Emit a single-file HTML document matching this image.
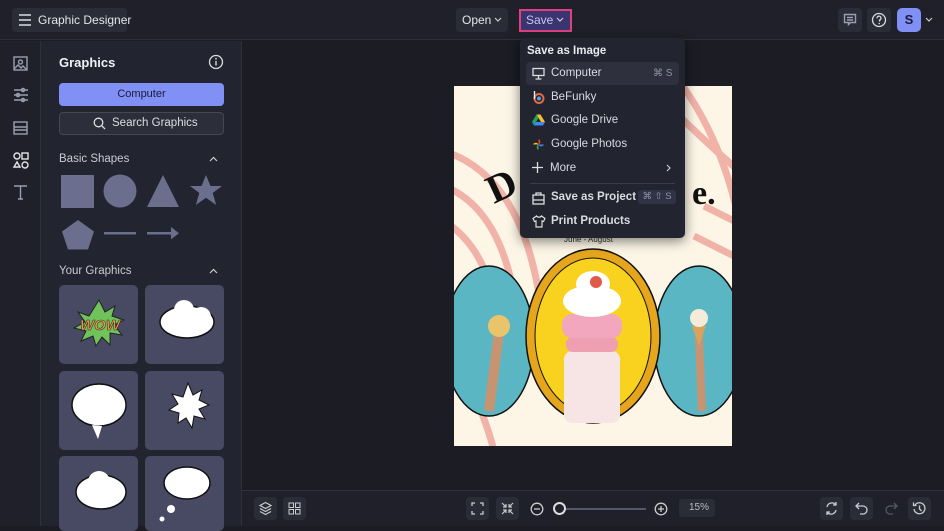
<!DOCTYPE html>
<html><head><meta charset="utf-8"><style>
*{box-sizing:border-box;margin:0;padding:0}
body{width:944px;height:526px;overflow:hidden;background:#1b1c24;font-family:"Liberation Sans",sans-serif;color:#e4e5ec;position:relative;font-size:12px}
.a{position:absolute}
.btn{position:absolute;background:#2a2c38;border-radius:4px}
.ic{stroke:#9a9db0;fill:none;stroke-width:1.4}
.tile{position:absolute;width:79px;height:79px;background:#474a62;border-radius:5px}
.mi{position:absolute;left:10px;font-size:11.5px;color:#d9dae3}
</style></head><body>
<!-- top bar -->
<div class="a" style="left:0;top:0;width:944px;height:40px;background:#1f2029;border-bottom:1px solid #2e303c"></div>
<div class="btn" style="left:12px;top:8px;width:115px;height:24px;background:#2a2c37"></div>
<svg class="a" style="left:18px;top:13px" width="14" height="14"><path d="M1 2h12M1 7h12M1 12h12" stroke="#ddd" stroke-width="1.4"/></svg>
<div class="a" style="left:38px;top:13px;font-size:12px;color:#e4e5ec">Graphic Designer</div>
<div class="btn" style="left:456px;top:8px;width:52px;height:24px"></div>
<div class="a" style="left:462px;top:13px;font-size:12px">Open</div>
<svg class="a" style="left:494px;top:17px" width="8" height="6"><path d="M1 1l3 3 3-3" stroke="#ccc" fill="none" stroke-width="1.2"/></svg>
<div class="a" style="left:519px;top:9px;width:53px;height:23px;background:#3a3470;border:2px solid #e0407e"></div>
<div class="a" style="left:526px;top:13px;font-size:12px;color:#c9c6f0">Save</div>
<svg class="a" style="left:556px;top:17px" width="8" height="6"><path d="M1 1l3 3 3-3" stroke="#ccc" fill="none" stroke-width="1.2"/></svg>
<div class="btn" style="left:838px;top:8px;width:24px;height:24px"></div>
<svg class="a" style="left:843px;top:13px" width="14" height="14"><path d="M1.5 1.5h11v8h-5l-2 2v-2h-4z M4 4.5h6M4 7h6" class="ic" stroke="#ddd"/></svg>
<div class="btn" style="left:867px;top:8px;width:24px;height:24px"></div>
<svg class="a" style="left:871px;top:12px" width="16" height="16"><circle cx="8" cy="8" r="6.5" stroke="#ddd" fill="none" stroke-width="1.3"/><path d="M6 6.3a2 2 0 1 1 2.5 1.8v1.4" stroke="#ddd" fill="none" stroke-width="1.3"/><circle cx="8.2" cy="11.5" r=".8" fill="#ddd"/></svg>
<div class="a" style="left:897px;top:8px;width:24px;height:24px;background:#8190f5;border-radius:5px;color:#1a1b3a;font-weight:bold;font-size:13px;text-align:center;line-height:24px">S</div>
<svg class="a" style="left:925px;top:17px" width="8" height="6"><path d="M1 1l3 3 3-3" stroke="#ccc" fill="none" stroke-width="1.2"/></svg>

<!-- left rail -->
<div class="a" style="left:0;top:41px;width:41px;height:485px;background:#1f2029;border-right:1px solid #2e303c"></div>
<svg class="a" style="left:12px;top:55px" width="18" height="150">
<rect x="2" y="2" width="13" height="13" class="ic"/><circle cx="8.5" cy="7" r="2" class="ic"/><path d="M2 14l4-4 3 3 2-2 4 4" class="ic"/>
<path d="M2 35h14M2 40h14M2 45h14" class="ic"/><circle cx="11" cy="35" r="1.6" fill="#1f2029" class="ic"/><circle cx="6" cy="40" r="1.6" fill="#1f2029" class="ic"/><circle cx="11" cy="45" r="1.6" fill="#1f2029" class="ic"/>
<rect x="2" y="67" width="13" height="12" class="ic"/><path d="M2 72h13M2 75h13" class="ic"/>
<circle cx="5" cy="101" r="3" stroke="#e4e5ec" fill="none" stroke-width="1.4"/><rect x="10" y="98" width="6" height="6" stroke="#e4e5ec" fill="none" stroke-width="1.4"/><path d="M5 107l3 5h-6z" stroke="#e4e5ec" fill="none" stroke-width="1.4"/><circle cx="13" cy="110" r="3" stroke="#e4e5ec" fill="none" stroke-width="1.4"/>
<path d="M2 131h13M8.5 131v13M6 144h5" class="ic"/>
</svg>

<!-- panel -->
<div class="a" style="left:41px;top:41px;width:201px;height:485px;background:#22242f;border-right:1px solid #2e303c"></div>
<div class="a" style="left:59px;top:55px;font-size:13px;font-weight:bold;color:#f0f0f5">Graphics</div>
<svg class="a" style="left:208px;top:54px" width="16" height="16"><circle cx="8" cy="8" r="6.5" stroke="#ddd" fill="none" stroke-width="1.3"/><path d="M8 7v4.5" stroke="#ddd" stroke-width="1.4"/><circle cx="8" cy="4.8" r=".9" fill="#ddd"/></svg>
<div class="a" style="left:59px;top:83px;width:165px;height:23px;background:#8190f5;border-radius:4px;color:#1a1b3a;text-align:center;line-height:23px;font-size:11px">Computer</div>
<div class="a" style="left:59px;top:112px;width:165px;height:23px;background:#2c2e3a;border:1px solid #444758;border-radius:4px"></div>
<div class="a" style="left:112px;top:117px;font-size:11.5px;color:#dcdde5">Search Graphics</div>
<svg class="a" style="left:93px;top:117px" width="13" height="13"><circle cx="5.5" cy="5.5" r="4.3" stroke="#ddd" fill="none" stroke-width="1.3"/><path d="M8.7 8.7l3.3 3.3" stroke="#ddd" stroke-width="1.3"/></svg>
<div class="a" style="left:59px;top:153px;font-size:11.5px;color:#c9cad3">Basic Shapes</div>
<svg class="a" style="left:209px;top:156px" width="9" height="6"><path d="M1 5l3.5-3.5L8 5" stroke="#ccc" fill="none" stroke-width="1.2"/></svg>
<svg class="a" style="left:59px;top:172px" width="166" height="80" fill="#6b6e8c">
<rect x="2" y="3" width="33" height="33"/><circle cx="61" cy="19" r="16.5"/><path d="M104 3l16 32h-32z"/>
<path d="M147 3l4.5 11h11.5l-9.3 7 3.5 12-10.2-7.2-10.2 7.2 3.5-12-9.3-7h11.5z"/>
<path d="M19 48l16 11.5-6 18h-20l-6-18z"/><rect x="45" y="60" width="32" height="2.5"/><rect x="88" y="60" width="26" height="2.5"/><path d="M112 55l8 6.2-8 6.2z"/>
</svg>
<div class="a" style="left:59px;top:265px;font-size:11.5px;color:#c9cad3">Your Graphics</div>
<svg class="a" style="left:209px;top:268px" width="9" height="6"><path d="M1 5l3.5-3.5L8 5" stroke="#ccc" fill="none" stroke-width="1.2"/></svg>
<div class="tile" style="left:59px;top:285px"></div><div class="tile" style="left:145px;top:285px"></div>
<div class="tile" style="left:59px;top:371px"></div><div class="tile" style="left:145px;top:371px"></div>
<div class="tile" style="left:59px;top:456px;height:75px"></div><div class="tile" style="left:145px;top:456px;height:75px"></div>
<svg class="a" style="left:59px;top:285px" width="166" height="241">
<path d="M40 15l6 12 10-6-3 10 12 4-10 5 8 10-12-2 0 12-8-8-6 9-3-10-12 5 5-10-12-3 11-6-7-10 11 4z" fill="#6fc35a" stroke="#222" stroke-width="1"/>
<text x="21" y="45" font-family="Liberation Sans" font-weight="bold" font-style="italic" font-size="15" fill="#f2973b" stroke="#333" stroke-width=".6">WOW</text>
<ellipse cx="128" cy="37" rx="27" ry="16" fill="#fff" stroke="#111" stroke-width="1.5"/><circle cx="125" cy="25" r="10" fill="#fff"/><circle cx="142" cy="32" r="10" fill="#fff"/>
<ellipse cx="40" cy="120" rx="27" ry="21" fill="#fff" stroke="#111" stroke-width="1.5"/><path d="M33 140l6 14 4-13z" fill="#fff"/>
<path d="M129 98l5 12 9-5-3 10 10 5-10 4 6 10-11-3-2 12-6-10-8 5 1-10-10-3 9-6-6-10 11 3z" fill="#fff" stroke="#111" stroke-width="1"/>
<ellipse cx="42" cy="207" rx="25" ry="17" fill="#fff" stroke="#111" stroke-width="1.5"/><circle cx="40" cy="197" r="11" fill="#fff"/>
<ellipse cx="128" cy="198" rx="23" ry="16" fill="#fff" stroke="#111" stroke-width="1.5"/><circle cx="112" cy="224" r="4" fill="#fff"/><circle cx="103" cy="234" r="2.5" fill="#fff"/>
</svg>

<!-- canvas -->
<div class="a" style="left:454px;top:86px;width:278px;height:360px;background:#fdf6e6;overflow:hidden">
<svg width="278" height="360" style="position:absolute;left:0;top:0">
<g fill="none" stroke="#f1b3a8" stroke-width="7">
<path d="M-10 65c60 20 90 80 100 180"/><path d="M-10 100c50 20 70 80 75 150"/><path d="M-10 135c40 25 50 70 55 110"/><path d="M-10 245c20 40 40 80 50 120"/>
<path d="M225 -5c30 40 50 90 60 140"/><path d="M250 120l40 20"/><path d="M240 150l40 20"/><path d="M190 -5c30 30 60 60 95 90"/>
</g>
<text x="40" y="118" transform="rotate(-25 40 118)" font-family="Liberation Serif" font-weight="bold" font-size="40" fill="#111">D</text>
<text x="238" y="118" font-family="Liberation Serif" font-weight="bold" font-size="34" fill="#111">e.</text>
<text x="110" y="156" font-size="8" fill="#333">June - August</text>
<ellipse cx="35" cy="255" rx="45" ry="75" fill="#5bb6c4" stroke="#111" stroke-width="1.5"/>
<ellipse cx="245" cy="255" rx="45" ry="75" fill="#5bb6c4" stroke="#111" stroke-width="1.5"/>
<ellipse cx="139" cy="250" rx="67" ry="87" fill="#e5a51c" stroke="#111" stroke-width="1.5"/>
<ellipse cx="139" cy="250" rx="58" ry="78" fill="#f8d21f" stroke="#111" stroke-width="1"/>
<rect x="110" y="265" width="56" height="72" rx="8" fill="#f7e5e5"/>
<rect x="112" y="251" width="52" height="15" rx="7" fill="#ee9fb2"/>
<rect x="108" y="228" width="60" height="24" rx="10" fill="#f2a7be"/>
<ellipse cx="138" cy="215" rx="29" ry="16" fill="#fff"/><ellipse cx="139" cy="198" rx="17" ry="13" fill="#fff"/><circle cx="142" cy="196" r="6" fill="#e05a4a"/>
<path d="M45 245l-10 80" stroke="#c79472" stroke-width="10"/><circle cx="45" cy="240" r="11" fill="#e9c46a"/>
<path d="M245 250l3 75" stroke="#c79472" stroke-width="8"/><path d="M238 240l7 20 7-20z" fill="#d9a35c"/><circle cx="245" cy="232" r="9" fill="#f4ecd9"/>
</svg>
</div>

<!-- dropdown -->
<div class="a" style="left:520px;top:38px;width:165px;height:200px;background:#22242f;border-radius:5px;box-shadow:0 3px 12px rgba(0,0,0,.5)">
<div class="a" style="left:7px;top:7px;font-size:11.5px;font-weight:bold;color:#e8e9ef">Save as Image</div>
<div class="a" style="left:6px;top:24px;width:153px;height:23px;background:#2e303d;border-radius:4px"></div>
<svg class="a" style="left:12px;top:29px" width="13" height="13"><rect x="1" y="1.5" width="11" height="7" fill="none" stroke="#ddd" stroke-width="1.3"/><path d="M6.5 9v2.5M3.5 12h6" stroke="#ddd" stroke-width="1.3"/></svg>
<div class="mi" style="left:31px;top:29px">Computer</div>
<div class="a" style="left:133px;top:30px;font-size:10px;color:#8f92a5">⌘ S</div>
<svg class="a" style="left:12px;top:52px" width="13" height="14"><circle cx="7" cy="8.5" r="4.5" fill="none" stroke="#e0694a" stroke-width="2"/><circle cx="7" cy="8.5" r="2" fill="#5aa0e0"/><path d="M2.5 1v8" stroke="#eee" stroke-width="1.4"/></svg>
<div class="mi" style="left:31px;top:53px">BeFunky</div>
<svg class="a" style="left:12px;top:76px" width="13" height="12"><path d="M4.5 0.5h4l4.5 7.5h-4z" fill="#f6c02b"/><path d="M4.5.5L0 8l2 3.5L6.5 4z" fill="#1fa463"/><path d="M2 11.5h9l2-3.5H4z" fill="#4285f4"/></svg>
<div class="mi" style="left:31px;top:76px">Google Drive</div>
<svg class="a" style="left:12px;top:100px" width="13" height="13"><path d="M6.5 6.5V1a3 3 0 0 1 0 5.5z" fill="#ea4335"/><path d="M6.5 6.5H12a3 3 0 0 1-5.5 0z" fill="#4285f4"/><path d="M6.5 6.5V12a3 3 0 0 1 0-5.5z" fill="#34a853"/><path d="M6.5 6.5H1a3 3 0 0 1 5.5 0z" fill="#fbbc05"/></svg>
<div class="mi" style="left:31px;top:100px">Google Photos</div>
<svg class="a" style="left:12px;top:124px" width="11" height="11"><path d="M5.5 0v11M0 5.5h11" stroke="#ddd" stroke-width="1.3"/></svg>
<div class="mi" style="left:30px;top:124px">More</div>
<svg class="a" style="left:146px;top:126px" width="6" height="8"><path d="M1 1l3 3-3 3" stroke="#ccc" fill="none" stroke-width="1.2"/></svg>
<div class="a" style="left:10px;top:145px;width:145px;height:1px;background:#3a3c4a"></div>
<svg class="a" style="left:12px;top:154px" width="13" height="13"><rect x="1" y="3" width="11" height="9" fill="none" stroke="#ddd" stroke-width="1.3"/><path d="M4 3V1h5v2M1 8h11" stroke="#ddd" stroke-width="1.3" fill="none"/></svg>
<div class="mi" style="left:31px;top:153px;font-weight:bold">Save as Project</div>
<div class="a" style="left:118px;top:152px;width:38px;height:14px;background:#303346;border-radius:3px;font-size:9.5px;color:#8f92a5;text-align:center;line-height:14px">⌘ ⇧ S</div>
<svg class="a" style="left:12px;top:177px" width="14" height="13"><path d="M4.5 1L1 3.5l1.5 3L4 6v6h6V6l1.5.5 1.5-3L9.5 1c-.5 1.5-4.5 1.5-5 0z" fill="none" stroke="#ddd" stroke-width="1.2"/></svg>
<div class="mi" style="left:31px;top:177px;font-weight:bold">Print Products</div>
</div>

<!-- bottom bar -->
<div class="a" style="left:242px;top:490px;width:702px;height:36px;background:#1f2029;border-top:1px solid #2e303c"></div>
<div class="btn" style="left:254px;top:497px;width:23px;height:23px"></div>
<svg class="a" style="left:258px;top:501px" width="15" height="15"><path d="M7.5 1.5L13 4.5 7.5 7.5 2 4.5zM2 7.5l5.5 3 5.5-3M2 10.5l5.5 3 5.5-3" stroke="#ccc" fill="none" stroke-width="1.2"/></svg>
<div class="btn" style="left:283px;top:497px;width:23px;height:23px"></div>
<svg class="a" style="left:288px;top:502px" width="13" height="13"><rect x="1" y="1" width="4.5" height="4.5" stroke="#ccc" fill="none"/><rect x="7.5" y="1" width="4.5" height="4.5" stroke="#ccc" fill="none"/><rect x="1" y="7.5" width="4.5" height="4.5" stroke="#ccc" fill="none"/><rect x="7.5" y="7.5" width="4.5" height="4.5" stroke="#ccc" fill="none"/></svg>
<div class="btn" style="left:466px;top:497px;width:23px;height:23px"></div>
<svg class="a" style="left:471px;top:502px" width="13" height="13"><path d="M1 4V1h3M9 1h3v3M12 9v3H9M4 12H1V9" stroke="#ccc" fill="none" stroke-width="1.3"/></svg>
<div class="btn" style="left:496px;top:497px;width:23px;height:23px"></div>
<svg class="a" style="left:501px;top:502px" width="13" height="13"><path d="M1 1l4 4M5 2v3H2M12 12L8 8M8 11V8h3M12 1L8 5M8 2v3h3M1 12l4-4M2 8h3v3" stroke="#ccc" fill="none" stroke-width="1.2"/></svg>
<svg class="a" style="left:530px;top:502px" width="14" height="14"><circle cx="7" cy="7" r="5.8" stroke="#ccc" fill="none" stroke-width="1.3"/><path d="M4 7h6" stroke="#ccc" stroke-width="1.3"/></svg>
<div class="a" style="left:560px;top:508px;width:86px;height:2px;background:#555868"></div>
<div class="a" style="left:553px;top:502px;width:13px;height:13px;border-radius:50%;border:2px solid #ddd;background:#1f2029"></div>
<svg class="a" style="left:654px;top:502px" width="14" height="14"><circle cx="7" cy="7" r="5.8" stroke="#ccc" fill="none" stroke-width="1.3"/><path d="M4 7h6M7 4v6" stroke="#ccc" stroke-width="1.3"/></svg>
<div class="a" style="left:679px;top:499px;width:36px;height:18px;background:#2a2c38;border-radius:3px;font-size:10px;color:#bbb;text-align:right;padding-right:6px;line-height:18px">15%</div>
<div class="btn" style="left:820px;top:497px;width:23px;height:23px"></div>
<svg class="a" style="left:824px;top:501px" width="15" height="15"><path d="M3 6a5 5 0 0 1 9-2M12 9a5 5 0 0 1-9 2M12 1v3H9M3 14v-3h3" stroke="#ccc" fill="none" stroke-width="1.3"/></svg>
<div class="btn" style="left:850px;top:497px;width:23px;height:23px"></div>
<svg class="a" style="left:855px;top:502px" width="14" height="13"><path d="M4 1L1 4l3 3M1 4h7a4 4 0 0 1 0 8H5" stroke="#ccc" fill="none" stroke-width="1.3"/></svg>
<svg class="a" style="left:884px;top:502px" width="14" height="13"><path d="M10 1l3 3-3 3M13 4H6a4 4 0 0 0 0 8h3" stroke="#555866" fill="none" stroke-width="1.3"/></svg>
<div class="btn" style="left:908px;top:497px;width:23px;height:23px"></div>
<svg class="a" style="left:912px;top:501px" width="15" height="15"><path d="M3 4a5.5 5.5 0 1 1-1 4M1.5 1.5V4.5h3M7.5 4.5v3.5l2 2" stroke="#ccc" fill="none" stroke-width="1.3"/></svg>
</body></html>
